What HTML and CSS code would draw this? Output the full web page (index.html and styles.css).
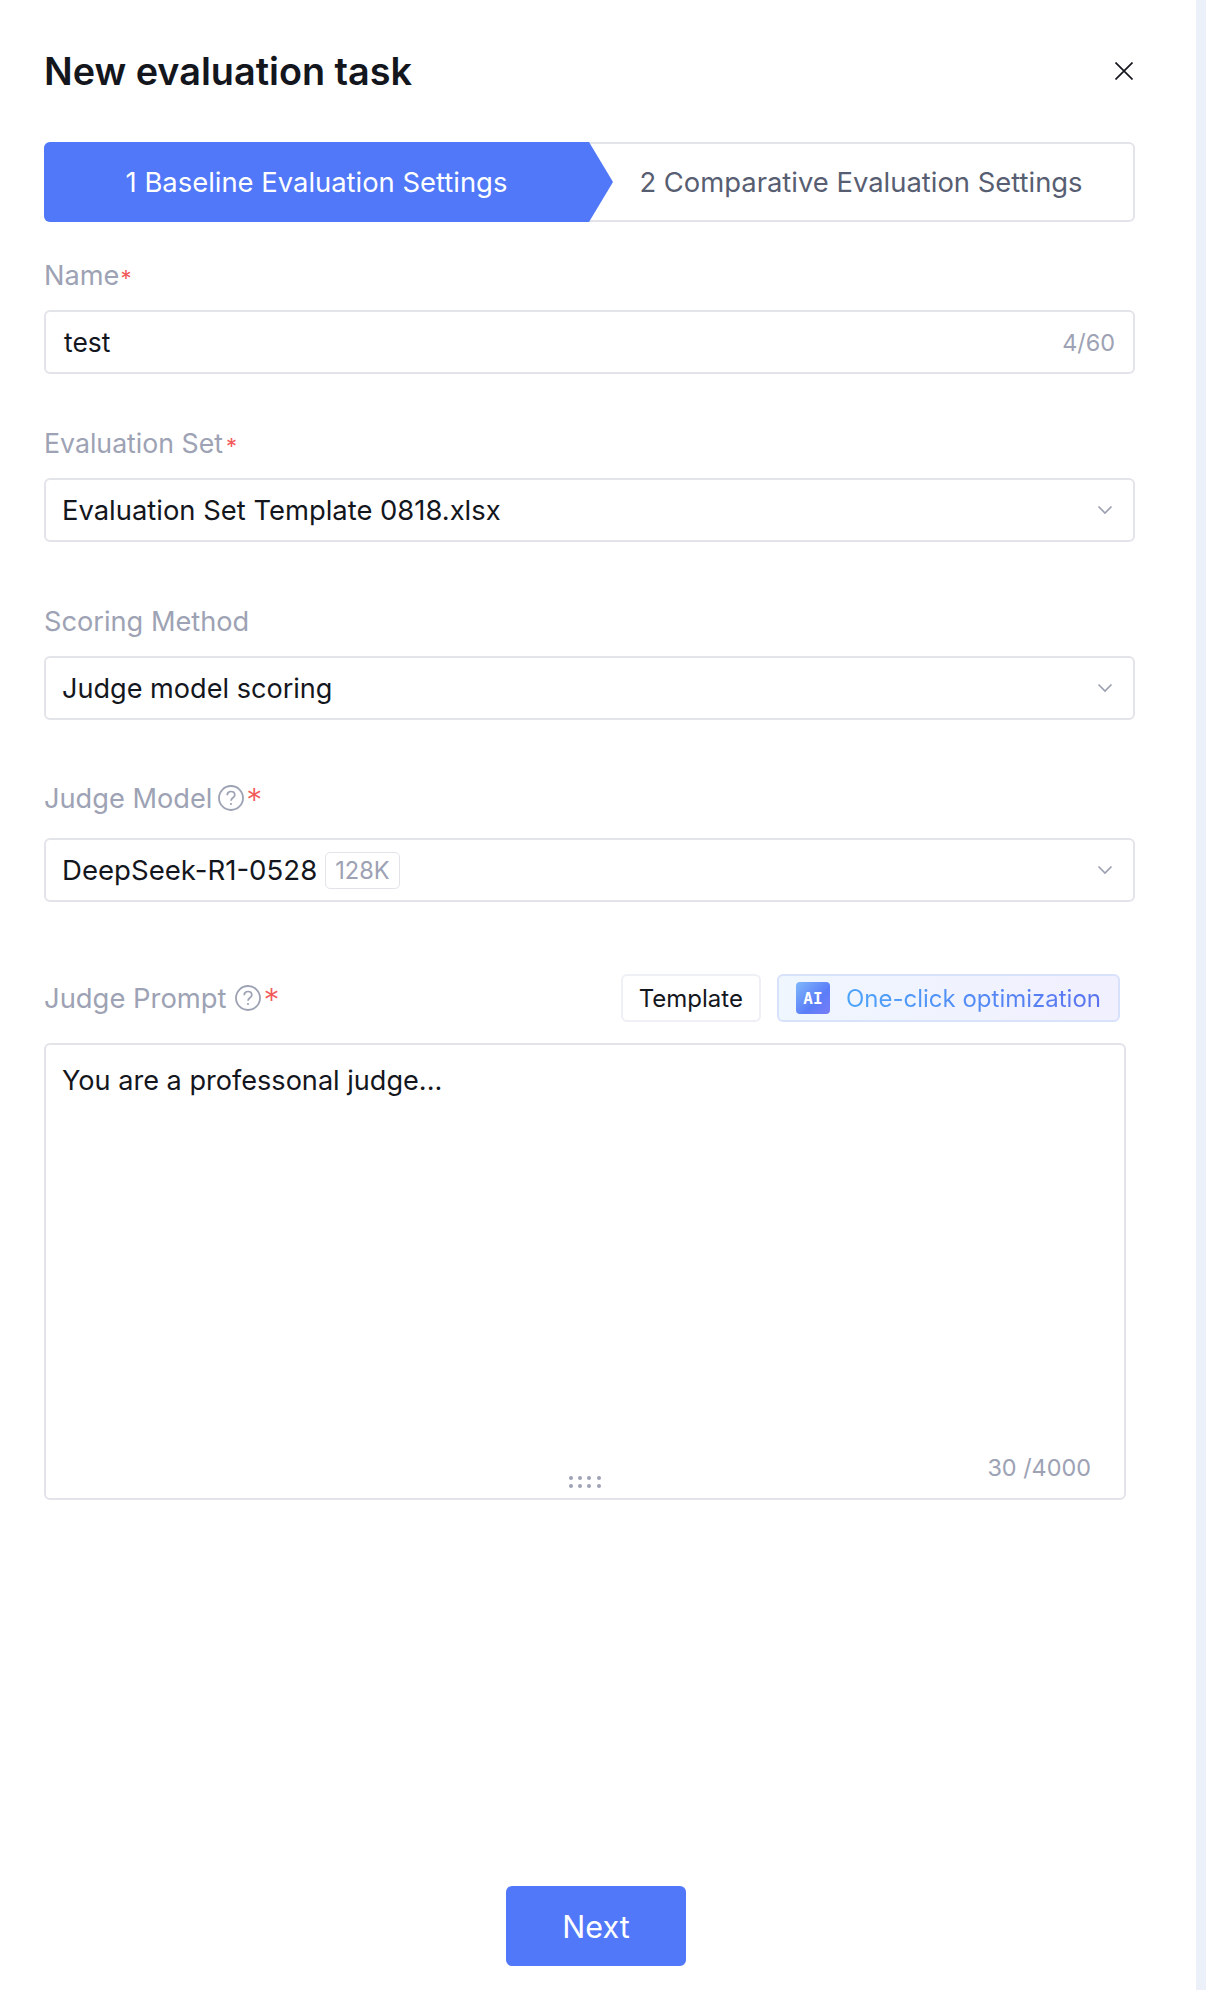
FILE: index.html
```html
<!DOCTYPE html>
<html lang="en">
<head>
<meta charset="utf-8">
<title>New evaluation task</title>
<link rel="stylesheet" href="styles.css">
</head>
<body>
<div class="page">
  <main class="panel">
    <header class="head">
      <h1 class="title">New evaluation task</h1>
      <svg class="close" viewBox="0 0 18 18" width="18" height="18"><path d="M0.500 0.500L17.500 17.500M17.500 0.500L0.500 17.500" fill="none" stroke="#16181f" stroke-width="1.7"/></svg>
    </header>
    <div class="steps">
      <div class="step step-active">1 Baseline Evaluation Settings</div>
      <div class="step step-next">2 Comparative Evaluation Settings</div>
    </div>
    <div class="field field-name">
      <div class="label">Name<span class="req-sm">*</span></div>
      <div class="control"><span class="value value-test">test</span><span class="count">4/60</span></div>
    </div>
    <div class="field field-set">
      <div class="label label-set">Evaluation Set<span class="req-sm">*</span></div>
      <div class="control"><span class="value">Evaluation Set Template 0818.xlsx</span>
        <svg class="chev" viewBox="0 0 16 10" width="16" height="10"><path d="M1.5 1.5L8 8L14.500 1.500" fill="none" stroke="#9a9eae" stroke-width="1.6"/></svg></div>
    </div>
    <div class="field field-method">
      <div class="label">Scoring Method</div>
      <div class="control"><span class="value value-method">Judge model scoring</span>
        <svg class="chev" viewBox="0 0 16 10" width="16" height="10"><path d="M1.5 1.5L8 8L14.500 1.500" fill="none" stroke="#9a9eae" stroke-width="1.6"/></svg></div>
    </div>
    <div class="field field-model">
      <div class="label">Judge Model<svg class="help" viewBox="0 0 26 26" width="26" height="26"><circle cx="13" cy="13" r="12" fill="none" stroke="#9da2b4" stroke-width="1.8"/><path d="M9.200 10.300C9.200 8 10.800 6.500 13 6.500C15.200 6.500 16.800 8 16.800 10C16.800 12.700 13 12.900 13 15.800" fill="none" stroke="#9da2b4" stroke-width="1.700"/><circle cx="13" cy="19" r="1.100" fill="#9da2b4"/></svg><span class="req-lg">*</span></div>
      <div class="control control-model"><span class="value value-model">DeepSeek-R1-0528</span><span class="tag">128K</span>
        <svg class="chev" viewBox="0 0 16 10" width="16" height="10"><path d="M1.5 1.5L8 8L14.500 1.500" fill="none" stroke="#9a9eae" stroke-width="1.6"/></svg></div>
    </div>
    <div class="prompt">
      <div class="prompt-head">
        <div class="label label-inline">Judge Prompt<svg class="help" viewBox="0 0 26 26" width="26" height="26"><circle cx="13" cy="13" r="12" fill="none" stroke="#9da2b4" stroke-width="1.8"/><path d="M9.200 10.300C9.200 8 10.800 6.500 13 6.500C15.200 6.500 16.800 8 16.800 10C16.800 12.700 13 12.900 13 15.800" fill="none" stroke="#9da2b4" stroke-width="1.700"/><circle cx="13" cy="19" r="1.100" fill="#9da2b4"/></svg><span class="req-lg">*</span></div>
        <div class="actions">
          <div class="btn-template">Template</div>
          <div class="btn-ai"><span class="ai-badge">AI</span><span class="ai-text">One-click optimization</span></div>
        </div>
      </div>
      <div class="textarea">
        <div class="value value-method">You are a professonal judge...</div>
        <div class="text-foot">
          <span class="grip"><i></i><i></i><i></i><i></i><i></i><i></i><i></i><i></i></span>
          <span class="count count-text">30 /4000</span>
        </div>
      </div>
    </div>
    <div class="foot"><div class="next">Next</div></div>
  </main>
  <aside class="rail"></aside>
</div>
</body>
</html>
```
FILE: styles.css
```css
* { box-sizing: border-box; }
html, body { margin: 0; padding: 0; }
body { font-family: Inter, "Liberation Sans", sans-serif; background: #fff; color: #14161d; }
.page { display: flex; width: 1206px; height: 1990px; overflow: hidden; }
.panel { width: 1196px; height: 1990px; padding: 0 61px 24px 44px; display: flex; flex-direction: column; background: #fff; }
.rail { width: 10px; background: #ecf0f8; }
.head { height: 142px; display: flex; align-items: flex-start; justify-content: space-between; padding-top: 48px; }
.title { margin: 0; font-size: 37.8px; line-height: 46px; font-weight: 600; color: #14161d; }
.close { margin: 14px 2px 0 0; }
.steps { display: flex; height: 80px; border: 2px solid #e3e4ea; border-radius: 6px; position: relative; }
.step { display: flex; align-items: center; justify-content: center; font-size: 27.4px; }
.step-active { width: 569px; margin: -2px 0 -2px -2px; padding-right: 24px; background: #5078f8; color: #fff; clip-path: polygon(0 0, 545px 0, 569px 50%, 545px 100%, 0 100%); border-radius: 6px 0 0 6px; }
.step-next { flex: 1; color: #585e72; padding-right: 24px; }
.field { display: flex; flex-direction: column; }
.label { display: flex; align-items: center; height: 32px; font-size: 27.2px; color: #9da2b4; }
.label-set { font-size: 26.7px; }
.label-set .req-sm { margin-left: 3px; }
.label-inline { font-size: 27.4px; }
.label-inline .help { margin-left: 8px; }
.label-inline .req-lg { margin-left: 3px; }
.req-sm { color: #f25a5a; font-size: 22px; margin-left: 1px; padding-top: 6px; }
.req-lg { color: #f25a5a; font-size: 32px; font-weight: 300; margin-left: 2px; line-height: 32px; height: 26px; }
.help { margin-left: 6px; }
.control { display: flex; align-items: center; height: 64px; border: 2px solid #e3e4ea; border-radius: 6px; padding: 0 16px; margin-top: 19px; }
.control-model { margin-top: 24px; }
.value { font-size: 27.4px; color: #14161d; }
.value-test { margin-left: 2px; font-size: 26.4px; }
.value-method { font-size: 27.1px; }
.value-model { font-size: 27.6px; }
.count { margin-left: auto; margin-right: 2px; font-size: 23.4px; color: #9da2b4; }
.chev { margin-left: auto; margin-right: 4px; }
.tag { margin-left: 8px; height: 37px; padding: 0 9px; display: flex; align-items: center; font-size: 23.6px; color: #9da2b4; border: 1px solid #e3e4ea; border-radius: 5px; }
.field-name { margin-top: 37px; }
.field-set { margin-top: 53px; }
.field-method { margin-top: 63px; }
.field-model { margin-top: 62px; }
.prompt { margin-top: 72px; display: flex; flex-direction: column; width: 1082px; }
.prompt-head { display: flex; align-items: center; justify-content: space-between; height: 48px; padding-right: 6px; }
.actions { display: flex; gap: 16px; }
.btn-template { height: 48px; display: flex; align-items: center; padding: 0 16px; border: 2px solid #eff0f5; border-radius: 6px; font-size: 24px; color: #14161d; }
.btn-ai { height: 48px; display: flex; align-items: center; gap: 16px; padding: 0 17px 0 17px; border: 2px solid #d8e2fb; border-radius: 6px; background: linear-gradient(100deg, #eff6fe, #f1f0fe); font-size: 24px; }
.ai-badge { width: 34px; height: 32px; border-radius: 4px; background: linear-gradient(135deg, #7fb8fb, #5b7df8 60%, #7a7cf8); color: #fff; font-family: "DejaVu Sans Mono", monospace; font-weight: 700; font-size: 16px; display: flex; align-items: center; justify-content: center; }
.ai-text { background: linear-gradient(90deg, #4ca4fa, #5b72f0); -webkit-background-clip: text; background-clip: text; color: transparent; }
.textarea { margin-top: 21px; height: 457px; border: 2px solid #e3e4ea; border-radius: 6px; padding: 19px 16px 0; display: flex; flex-direction: column; }
.text-foot { margin-top: auto; display: flex; align-items: flex-end; justify-content: flex-end; padding: 0 17px 16px 0; position: relative; height: 50px; }
.grip { position: absolute; left: 507px; bottom: 10px; display: grid; grid-template-columns: repeat(4, 4px); column-gap: 5.2px; row-gap: 4px; }
.grip i { width: 4px; height: 4px; border-radius: 50%; background: #9da2b4; display: block; }
.count-text { font-size: 23.4px; margin: 0; }
.foot { margin-top: auto; display: flex; justify-content: center; padding-left: 13px; }
.next { width: 180px; height: 80px; border-radius: 6px; background: #5078f8; color: #fff; display: flex; align-items: center; justify-content: center; font-size: 30.5px; }
```
